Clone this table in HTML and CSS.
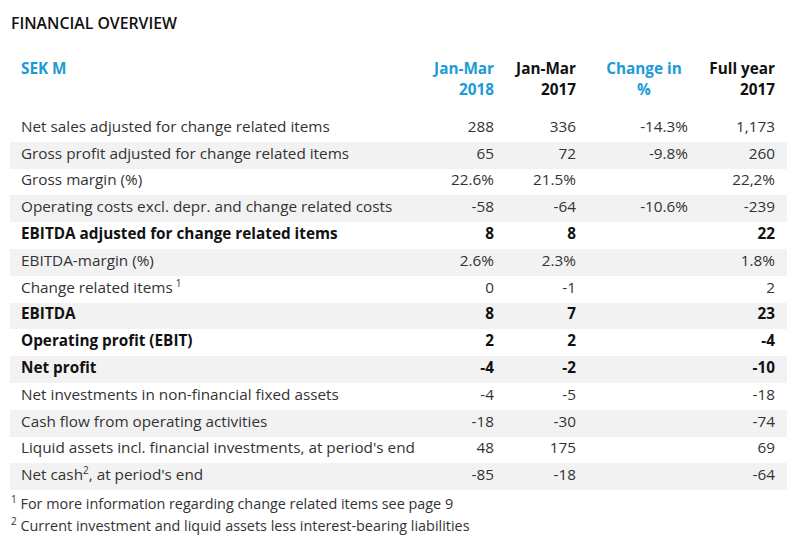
FILE: index.html
```html
<!DOCTYPE html>
<html lang="en">
<head>
<meta charset="utf-8">
<title>Financial overview</title>
<link rel="stylesheet" href="styles.css">
</head>
<body>
<div class="page">
  <h1 class="title">FINANCIAL OVERVIEW</h1>
  <table class="fin">
    <colgroup>
      <col class="c-label"><col class="c-num"><col class="c-num"><col class="c-chg"><col class="c-fy">
    </colgroup>
    <thead>
      <tr>
        <th class="lbl blue">SEK M</th>
        <th class="blue">Jan-Mar<br>2018</th>
        <th>Jan-Mar<br>2017</th>
        <th class="blue center">Change in<br>%</th>
        <th>Full year<br>2017</th>
      </tr>
    </thead>
    <tbody>
      <tr><td class="lbl">Net sales adjusted for change related items</td><td>288</td><td>336</td><td>-14.3%</td><td>1,173</td></tr>
      <tr><td class="lbl">Gross profit adjusted for change related items</td><td>65</td><td>72</td><td>-9.8%</td><td>260</td></tr>
      <tr><td class="lbl">Gross margin (%)</td><td>22.6%</td><td>21.5%</td><td></td><td>22,2%</td></tr>
      <tr><td class="lbl">Operating costs excl. depr. and change related costs</td><td>-58</td><td>-64</td><td>-10.6%</td><td>-239</td></tr>
      <tr class="bold"><td class="lbl">EBITDA adjusted for change related items</td><td>8</td><td>8</td><td></td><td>22</td></tr>
      <tr><td class="lbl">EBITDA-margin (%)</td><td>2.6%</td><td>2.3%</td><td></td><td>1.8%</td></tr>
      <tr><td class="lbl">Change related items<sup class="sup-gap">1</sup></td><td>0</td><td>-1</td><td></td><td>2</td></tr>
      <tr class="bold"><td class="lbl">EBITDA</td><td>8</td><td>7</td><td></td><td>23</td></tr>
      <tr class="bold"><td class="lbl">Operating profit (EBIT)</td><td>2</td><td>2</td><td></td><td>-4</td></tr>
      <tr class="bold"><td class="lbl">Net profit</td><td>-4</td><td>-2</td><td></td><td>-10</td></tr>
      <tr><td class="lbl">Net investments in non-financial fixed assets</td><td>-4</td><td>-5</td><td></td><td>-18</td></tr>
      <tr><td class="lbl">Cash flow from operating activities</td><td>-18</td><td>-30</td><td></td><td>-74</td></tr>
      <tr><td class="lbl">Liquid assets incl. financial investments, at period's end</td><td>48</td><td>175</td><td></td><td>69</td></tr>
      <tr><td class="lbl">Net cash<sup>2</sup>, at period's end</td><td>-85</td><td>-18</td><td></td><td>-64</td></tr>
    </tbody>
  </table>
  <div class="notes">
    <p class="note"><sup>1</sup> For more information regarding change related items see page 9</p>
    <p class="note"><sup>2</sup> Current investment and liquid assets less interest-bearing liabilities</p>
  </div>
</div>
</body>
</html>
```

FILE: styles.css
```css
html, body {
  margin: 0;
  padding: 0;
  background: #ffffff;
}

body {
  font-family: "Open Sans", "Liberation Sans", sans-serif;
  color: #333333;
}

.page {
  padding: 12px 13px 0 10px;
}

.title {
  margin: 0 0 0 1px;
  font-size: 15.8px;
  line-height: 22px;
  font-weight: 600;
  color: #111111;
}

.fin {
  margin-top: 16px;
  width: 777px;
  border-collapse: collapse;
  table-layout: fixed;
  font-size: 15.3px;
}

.c-label { width: 414px; }
.c-num { width: 82px; }
.c-chg { width: 112px; }
.c-fy { width: 87px; }

.fin th {
  font-weight: 700;
  line-height: 21px;
  padding: 7.6px 12px 15.4px 0;
  text-align: right;
  vertical-align: top;
  color: #111111;
}

.fin th.lbl { text-align: left; padding-left: 11px; }
.fin th.center { text-align: center; padding-left: 12px; }
.fin th.blue { color: #1a9bd7; }

.fin td {
  height: 26.8px;
  padding: 0 12px 4px 0;
  line-height: 21px;
  text-align: right;
  white-space: nowrap;
  box-sizing: border-box;
}

.fin td.lbl {
  text-align: left;
  padding-left: 11px;
}

.fin tbody tr:nth-child(even) td { background: #f2f2f2; }

.fin tr.bold td {
  font-weight: 700;
  color: #111111;
}

sup {
  font-size: 10px;
  line-height: 0;
  vertical-align: 6px;
}

.sup-gap { margin-left: 3px; }

.notes { padding: 3px 0 0 1px; }

.note {
  margin: 0;
  font-size: 14.4px;
  line-height: 22px;
}
```
